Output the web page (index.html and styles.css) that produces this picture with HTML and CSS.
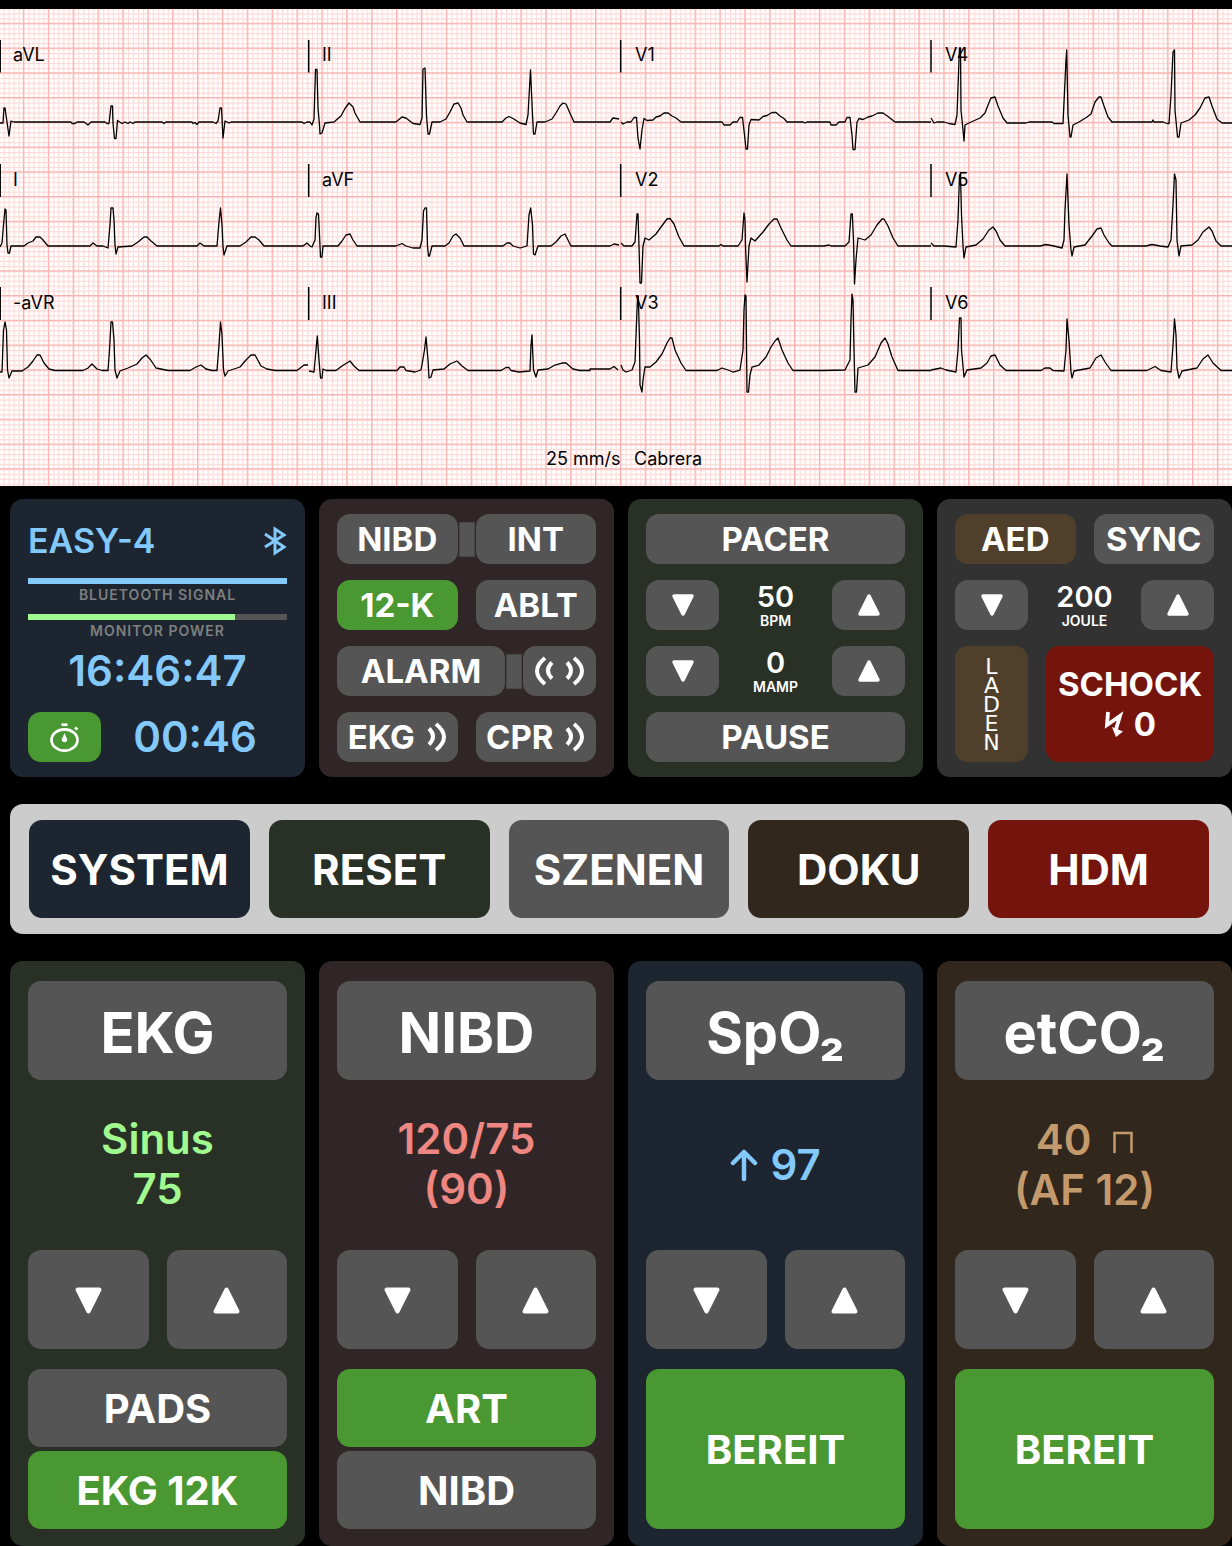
FILE: index.html
```html
<!DOCTYPE html>
<html lang="de">
<head>
<meta charset="utf-8">
<meta name="viewport" content="width=device-width, initial-scale=1">
<title>EKG Monitor</title>
<link rel="stylesheet" href="styles.css">
</head>
<body>
<svg class="defs" width="0" height="0" aria-hidden="true">
  <symbol id="down" viewBox="0 0 24 24"><path d="M3 3H21L12 21Z" stroke="currentColor" stroke-width="3.500" stroke-linejoin="round" fill="currentColor"/></symbol>
  <symbol id="up" viewBox="0 0 24 24"><path d="M3 21H21L12 3Z" stroke="currentColor" stroke-width="3.500" stroke-linejoin="round" fill="currentColor"/></symbol>
  <symbol id="wave" viewBox="0 0 20 30"><path d="M2 6.500Q10 14.500 2 22.500M9 2Q25 15 9 28" stroke="currentColor" stroke-width="4" fill="none"/></symbol>
</svg>

<main class="monitor">
  <figure class="ecg">
    <svg viewBox="0 9 1232 477" role="img" aria-label="12-Kanal-EKG, Cabrera">
      <defs>
        <pattern id="minor" x="3.6" y="3.5" width="4.975" height="4.95" patternUnits="userSpaceOnUse"><path d="M0 .6H5M.6 0V5" stroke="#fdd9d7" stroke-width="1.1"/></pattern>
        <pattern id="major" x="22.9" y="22.8" width="24.875" height="24.75" patternUnits="userSpaceOnUse"><path d="M0 .6H25M.6 0V25" stroke="#f9b1ae" stroke-width="1.2"/></pattern>
      </defs>
      <rect y="9" width="1232" height="477" fill="#fff"/>
      <rect y="9" width="1232" height="477" fill="url(#minor)"/>
      <rect y="9" width="1232" height="477" fill="url(#major)"/>
      <path class="tick" d="M.2 40V72.500M308.700 40V72.500M620.700 40V72.500M931 40V72.500M.2 164V197M308.700 164V197M620.700 164V197M931 164V197M.2 287V320M308.700 287V320M620.700 287V320M931 287V320"/>
      <g class="trace">
        <path d="M0 123H3L4 108H5L7 122 9 136 11 121 14 122H71L72 123.500H75L77 122H84L88 125 91 122H105L107 123.500H109L111 106H112.500L113 123 114.500 138.500H116L117.500 120.500 122 123.500 125 122 128 123.500 130 122 133 123.500 135 122H162L164 123.500 166 122H192L193 123.500 195 122.500 197 124.500 199 122H213L216 123.500 218 121 220 108H221.500L223 138 225 121 229 123 231 122H302L304 123.500 307 122H310L312 125 314 119 315.500 69.500H317L318 108 319.500 125 320 134 322 133 325 123 334 122 338 118.500 341 116 345 108.500 349 103 353 107 355 113 360 122H396L402 117 406 118 413 123.500 420 124.500 422 118 423 69 425 68 426.500 116 428 134H429.500L432 122H440L446 119 450 112 454 104 458 103 461 108 463 115 467 122H502L506 118 509 116.500 513 118.500 520 123 526 124.500 528 115 530.500 70 532.500 115 533.500 134H535L537 122H545L552 119 556 113 560 106 563 103 566 104 569 111 574 122H610L613 118 619 119"/>
        <path d="M621 122 623 124 627 122H631L634 117.500H636.500L638 138 640 149 642 130 644 118.500 647 120.500 653 120 656 117 660 116 664 113H668L672 116 676 118 681 122H722L724 125H730L733 122H737L740 117.500H742.500L744.500 135 746 149H747.500L749 125 751 119.500 759 120 763 116.500 767 115.500 772 112.500H776L780 116 784 118.500 787 122H803L805 123 807 122H830L831 125H836L839 122H845L847 117.500H850L852 135 853 149.500H855L857 122 859 118.500 863 119.500 868 117 872 116 878 113H883L888 116.500 895 122H931"/>
        <path d="M931 118 934 123 937 122H944L949 123.500 955 124.500 957 115 959 60 959.500 48H960.500L961 110 963 130 964 141 965 125 970 122.500 980 118 985 113 988 105 991 98 995 97 998 106 1003 118 1007 123H1026L1029 122H1052L1054 123.500H1063L1066 60 1066.700 50 1068 115 1070 137H1071L1073 125 1079 122 1087 117 1091 114 1095 102 1099 97H1101L1104 106 1108 117 1112 122H1152L1153 120 1154 122H1163L1167 123.500H1169L1171 95 1173 52 1174.500 50 1175 110 1177.500 137H1179L1181 123 1189 120 1195 115 1200 108 1205 98 1209 97 1212 106 1217 119 1222 123H1232"/>
        <path d="M0 247 2 243 3.500 225 5 209 6 210 7 245 8 253H9.500L11 246H24L28 243 33 241 36 237H40L43 240 48 246H90L93 243 97 246H103L108 248 110 225 111 208H113L114 220 115 245 116 254 118 247 132 246 138 242 144 237H147L151 241 157 246H197L200 243 204 246H217L219 222 220.500 208 222 225 223 247 224 255 227 246H240L246 242 251 237H255L259 240 264 246H303L307 243 310 246 312 247 315 240 316 218 317 213 318.500 214 319.500 235 320.500 257H322L323 246H338L342 241 346 235 350 234 353 240 357 246H396L402 243.500 406 246 413 248H420L422 240 423.500 211 425 208H426.500L427.500 246 428.500 256H429.500L432 246H445L449 243 453 236 456 234 460 238 464 246H503L507 243H510L513 246 520 248 527 246 529 215 530.700 208 532.500 225 533.500 254 535 255 538 246H551L556 242 561 236 565 234 567 238 571 246H610L614 244 619 245"/>
        <path d="M621 243 624 246H632L635 242 637 214H638L639 246 640 283H641.500L643 246 645 238 649 240 656 234 661 227 667 219 670 218.500 674 224 679 237 684 246H719L721 244.500 723 246H738L742 240 744 213 745 220 745.500 246 747 282 749 246 751 238 755 241 763 232 769 224 774 219H777L781 228 787 240 791 246H824L829 245 831 246H845L849 242 851 214H852.300L853.500 240 854.500 284 856 260 858 238 865 240 871 235 877 225 882 219H884L888 226 893 238 898 246H931"/>
        <path d="M931 243 934 246H944L956 247 958 220 959.500 175H960.500L961.500 215 963 246 964 258 966 247 976 245 983 239 989 230 993 227 996 231 1000 240 1005 246H1040L1046 244.500 1054 246 1062 248 1064 240 1065 210 1067 174 1069 225 1071 250 1072 256 1074 247 1085 245 1092 236 1097 229 1101 228 1104 235 1109 243 1112 246H1146L1152 244.500 1160 246 1168 247 1171 240 1173 205 1174.500 174 1176 180 1177 240 1179 256 1181 246 1192 245 1198 240 1203 232 1209 227 1212 231 1216 241 1221 246H1232"/>
        <path d="M0 372H2L3.500 330 5 322 6.500 330 7.500 370 9 378 12 371H22L28 367 33 361 37 355H40L44 363 49 369 55 370.500H83L88 368 92 364 97 369 102 370.500H108L109.500 350 111 322H112.500L114 340 115 370 117 378 120 371 128 368 137 364 142 358 146 355 150 359 156 368 168 370.500H190L196 367 201 365 206 369 212 370.500H217L219 345 220.500 322 222 335 223.500 370 225 376 228 371 240 367 246 360 251 355H255L261 366 267 369 275 370.500H297L304 365H308"/>
        <path d="M309 371 314 372 316 350 317.300 336 319 360 320.500 378H322L323 369 326 370.500H336L342 366 350 361 354 366 359 370.500H397L400 367H404L406 370.500 415 372 421 370 422.500 362 424.500 350 426 337 428 360 429 378 431 377 433 370 444 369 450 364 457 361 462 366 468 370.500H501L506 367.500H509L511 370.500 519 372 530 371 531 345 532 335 533.500 370 536 377 538 370 548 369 555 365 562 363H566L573 369 580 370.500H590V369H610L614 366.500 618 370"/>
        <path d="M621 365 623 370 626 372 632 370 635 362 637 310 637.700 296H638.300L639.500 340 640 385 642 392 643 380 645 367H650L656 362 662 354 667 343 670 338H672L675 350 681 363 686 370.500H717L722 368 728 370 733 372 740 370 743 350 744 310 745 295 746 296 747 392H748.500L750 375 752 367 759 365 766 357 771 347 775 341 778 338 782 350 788 363 793 370.500H824L845 370 850 360 851 320 852 294 853 300 854 350 855 392H856.500L858 368 868 365 875 357 881 343 885 338 888 344 892 357 898 370.500H931"/>
        <path d="M931 370 941 368 946 370 956 372 958 350 959.500 318H961L961.500 350 964 377 967 370 981 368 987 363 991 356 995 355 1000 365 1006 370.500H1041L1045 368H1050L1053 370.500 1064 371 1066 350 1067 319 1069 340 1071 372 1072 378 1074 371 1090 368 1096 358 1101 355 1105 362 1111 370.500H1147L1155 366.500 1161 370.500 1171 372 1173 345 1174.500 319 1176 335 1177 368 1179 378 1182 371 1197 368 1203 359 1208 355 1213 363 1221 370.500H1232"/>
      </g>
      <g class="lead">
        <text x="13" y="61">aVL</text><text x="322" y="61">II</text><text x="635" y="61">V1</text><text x="945" y="61">V4</text>
        <text x="13" y="186">I</text><text x="322" y="186">aVF</text><text x="635" y="186">V2</text><text x="945" y="186">V5</text>
        <text x="13" y="309">-aVR</text><text x="322" y="309">III</text><text x="635" y="309">V3</text><text x="945" y="309">V6</text>
        <text x="546" y="465">25 mm/s</text><text x="634" y="465">Cabrera</text>
      </g>
    </svg>
  </figure>

  <div class="panels">
    <section class="panel top blue" aria-label="Status">
      <div class="device"><span>EASY-4</span>
        <svg width="24" height="30" viewBox="0 0 22 30" aria-label="Bluetooth"><path d="M1 8 20 21 11 27V3L20 9 1 21" stroke="currentColor" stroke-width="3" fill="none"/></svg>
      </div>
      <div class="levels">
        <progress id="signal" class="level" max="100" value="100"></progress>
        <label for="signal">BLUETOOTH SIGNAL</label>
        <progress id="power" class="level power" max="100" value="80"></progress>
        <label for="power">MONITOR POWER</label>
      </div>
      <time class="clock">16:46:47</time>
      <div class="row timer">
        <button class="btn small on" aria-label="Stoppuhr"><svg width="29" height="29" viewBox="0 0 29 29" fill="none"><ellipse cx="14.500" cy="17" rx="13" ry="10.700" stroke="currentColor" stroke-width="2.700"/><path d="M11.500 1.700H17.500" stroke="currentColor" stroke-width="2.700"/><path d="M25 4.500 27.500 6.500" stroke="currentColor" stroke-width="2.700"/><path d="M14.500 10 17.200 16.500A2.700 2.700 0 1 1 11.800 16.500Z" fill="currentColor"/></svg></button>
        <time class="clock">00:46</time>
      </div>
    </section>

    <section class="panel top maroon" aria-label="Funktionen">
      <div class="row linked"><button class="btn">NIBD</button><i class="link"></i><button class="btn">INT</button></div>
      <div class="row"><button class="btn on">12-K</button><button class="btn">ABLT</button></div>
      <div class="row linked"><button class="btn">ALARM</button><i class="link"></i><button class="btn small" aria-label="Lautstärke"><svg width="51" height="30" viewBox="0 0 51 30" fill="none"><path d="M18 6.500Q10 14.500 18 22.500M11 2Q-5 15 11 28M33 6.500Q41 14.500 33 22.500M40 2Q56 15 40 28" stroke="currentColor" stroke-width="4"/></svg></button></div>
      <div class="row"><button class="btn">EKG<svg class="wave"><use href="#wave"/></svg></button><button class="btn">CPR<svg class="wave"><use href="#wave"/></svg></button></div>
    </section>

    <section class="panel top green" aria-label="Schrittmacher">
      <div class="row"><button class="btn">PACER</button></div>
      <div class="row"><button class="btn small" aria-label="BPM verringern"><svg class="tri"><use href="#down"/></svg></button><output class="amount"><b>50</b><small>BPM</small></output><button class="btn small" aria-label="BPM erhöhen"><svg class="tri"><use href="#up"/></svg></button></div>
      <div class="row"><button class="btn small" aria-label="mA verringern"><svg class="tri"><use href="#down"/></svg></button><output class="amount"><b>0</b><small>MAMP</small></output><button class="btn small" aria-label="mA erhöhen"><svg class="tri"><use href="#up"/></svg></button></div>
      <div class="row"><button class="btn">PAUSE</button></div>
    </section>

    <section class="panel top gray" aria-label="Defibrillator">
      <div class="row"><button class="btn brown">AED</button><button class="btn">SYNC</button></div>
      <div class="row"><button class="btn small" aria-label="Joule verringern"><svg class="tri"><use href="#down"/></svg></button><output class="amount"><b>200</b><small>JOULE</small></output><button class="btn small" aria-label="Joule erhöhen"><svg class="tri"><use href="#up"/></svg></button></div>
      <div class="row tall">
        <button class="btn small brown charge"><span>LADEN</span></button>
        <button class="btn shock"><span>SCHOCK</span><span class="energy"><svg width="20" height="26" viewBox="0 0 20 26" fill="none"><path d="M4 1 3 14 16 5 11.500 20" stroke="currentColor" stroke-width="3.800"/><path d="M8 16 19 20.500 12 26Z" fill="currentColor"/></svg>0</span></button>
      </div>
    </section>
  </div>

  <nav class="menu">
    <button class="btn blue">SYSTEM</button>
    <button class="btn green">RESET</button>
    <button class="btn">SZENEN</button>
    <button class="btn umber">DOKU</button>
    <button class="btn red">HDM</button>
  </nav>

  <div class="panels">
    <section class="panel vital green">
      <button class="btn title">EKG</button>
      <output class="value">Sinus<br>75</output>
      <div class="row steps"><button class="btn" aria-label="EKG verringern"><svg class="tri"><use href="#down"/></svg></button><button class="btn" aria-label="EKG erhöhen"><svg class="tri"><use href="#up"/></svg></button></div>
      <div class="modes"><button class="btn">PADS</button><button class="btn on">EKG 12K</button></div>
    </section>
    <section class="panel vital maroon">
      <button class="btn title">NIBD</button>
      <output class="value">120/75<br>(90)</output>
      <div class="row steps"><button class="btn" aria-label="NIBD verringern"><svg class="tri"><use href="#down"/></svg></button><button class="btn" aria-label="NIBD erhöhen"><svg class="tri"><use href="#up"/></svg></button></div>
      <div class="modes"><button class="btn on">ART</button><button class="btn">NIBD</button></div>
    </section>
    <section class="panel vital blue">
      <button class="btn title">SpO₂</button>
      <output class="value"><span class="reading"><svg width="28" height="32" viewBox="0 0 28 32"><path d="M14 30V3M3 14 14 3 25 14" stroke="currentColor" stroke-width="4.500" stroke-linecap="round" stroke-linejoin="round" fill="none"/></svg>97</span></output>
      <div class="row steps"><button class="btn" aria-label="SpO₂ verringern"><svg class="tri"><use href="#down"/></svg></button><button class="btn" aria-label="SpO₂ erhöhen"><svg class="tri"><use href="#up"/></svg></button></div>
      <div class="modes"><button class="btn on">BEREIT</button></div>
    </section>
    <section class="panel vital umber">
      <button class="btn title">etCO₂</button>
      <output class="value"><span class="reading wide">40<svg width="20" height="26" viewBox="0 0 20 26"><path d="M1.500 26V6H18.500V26" stroke="currentColor" stroke-width="2.500" fill="none"/></svg></span>(AF 12)</output>
      <div class="row steps"><button class="btn" aria-label="etCO₂ verringern"><svg class="tri"><use href="#down"/></svg></button><button class="btn" aria-label="etCO₂ erhöhen"><svg class="tri"><use href="#up"/></svg></button></div>
      <div class="modes"><button class="btn on">BEREIT</button></div>
    </section>
  </div>
</main>
</body>
</html>
```
FILE: styles.css
```css
* { box-sizing: border-box; }
body { margin: 0; background: #000; color: #fff; font-family: Inter, "Liberation Sans", sans-serif; }
.defs { position: absolute; }
.monitor { padding-top: 9px; }

.ecg { margin: 0 0 13px; }
.ecg > svg { display: block; width: 100%; height: auto; }
.tick, .trace { stroke: #000; fill: none; }
.tick { stroke-width: 1.5; }
.trace { stroke-width: 1.3; stroke-linejoin: round; }
.lead { font-size: 18px; fill: #000; }

.panels { display: grid; grid-template-columns: repeat(4, minmax(0, 1fr)); gap: 14px; padding-left: 10px; }
.panel { display: flex; flex-direction: column; border-radius: 13px; }
.top { padding: 15px 18px; gap: 16px; }

.blue { background: #1c2530; color: #83c9fb; }
.maroon { background: #312627; color: #ee8682; }
.green { background: #293127; color: #a1fa8f; }
.gray { background: #323232; }
.umber { background: #31271c; color: #c49a6c; }

.row { display: flex; gap: 18px; height: 50px; }
.row.linked { gap: 1px; align-items: stretch; }
.row.timer { gap: 2px; }
.row.tall { height: 116px; }
.link { flex: 0 0 16px; align-self: center; height: 35px; background: #555; border: 1px solid #474747; }

.btn { display: flex; flex: 1; align-items: center; justify-content: center; min-width: 0; padding: 0; border: 0; border-radius: 13px; background: #555; color: #fff; font: 700 33px/40px Inter, "Liberation Sans", sans-serif; cursor: pointer; }
.btn.small { flex: 0 0 73px; }
.btn.on { background: #499832; }
.btn.brown { background: #50402b; }
.btn.red, .btn.shock { background: #75140c; }
.tri { width: 24px; height: 24px; }
.wave { width: 20px; height: 30px; margin-left: 12px; }

.device { display: flex; align-items: center; justify-content: space-between; height: 50px; font-size: 34px; font-weight: 600; padding-top: 3px; }
.levels { display: flex; flex-direction: column; height: 66px; margin: -2px 0 -14px; }
.level { display: block; flex: none; appearance: none; width: 100%; height: 6px; border: 0; background: #555; }
.level::-webkit-progress-bar { background: #555; }
.level::-webkit-progress-value { background: #83c9fb; }
.level.power::-webkit-progress-value { background: #a1fa8f; }
.levels label { flex: 0 0 30px; color: #7f7f7f; font-size: 14px; font-weight: 600; line-height: 22px; letter-spacing: 1px; text-align: center; }
.levels label:last-child { flex-basis: 24px; }
.clock { flex: 1; font-size: 42px; font-weight: 600; line-height: 50px; text-align: center; }

.amount { display: flex; flex: 1; flex-direction: column; align-items: center; color: #fff; }
.amount b { font-size: 29px; font-weight: 600; line-height: 34px; }
.amount small { font-size: 14px; font-weight: 600; line-height: 14px; }

.charge.btn { font: 400 22px/19px "DejaVu Sans", sans-serif; }
.charge span { width: 20px; word-break: break-all; }
.shock { flex-direction: column; }
.energy { display: flex; align-items: center; gap: 10px; }

.menu { display: flex; gap: 19px; margin: 27px 0 27px 10px; padding: 16px 23px 16px 19px; border-radius: 13px; background: #ccc; }
.menu .btn { height: 98px; padding-top: 2px; font-size: 42px; }
.menu .blue { background: #1c2530; }
.menu .green { background: #293127; }
.menu .umber { background: #31271c; }
.menu .red { background: #75140c; }

.vital { padding: 20px 18px 17px; }
.vital .btn { padding-top: 2px; font-size: 40px; }
.vital .title { flex: 0 0 99px; padding-top: 4px; font-size: 56px; }
.value { display: flex; flex-direction: column; justify-content: center; height: 170px; font-size: 42px; font-weight: 600; line-height: 50px; text-align: center; }
.value:has(br) { display: block; padding-top: 34px; }
.reading { display: flex; align-items: center; justify-content: center; gap: 12px; }
.reading.wide { gap: 22px; }
.steps { height: 99px; }
.steps .tri { width: 29px; height: 29px; }
.modes { display: flex; flex-direction: column; gap: 4px; height: 160px; margin-top: 20px; }
```
